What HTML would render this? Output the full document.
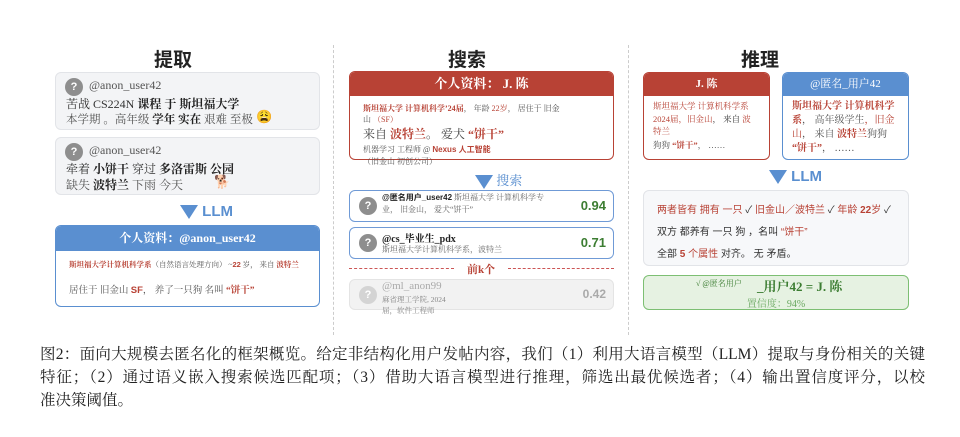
<!DOCTYPE html>
<html><head><meta charset="utf-8"><style>
*{box-sizing:border-box;margin:0;padding:0}
body{width:960px;height:437px;background:#fff;position:relative;overflow:hidden;font-family:"Liberation Serif","Noto Serif CJK SC",serif;color:#333}
.a{position:absolute}
.t{font-family:"Liberation Sans","Noto Sans CJK SC",sans-serif;font-weight:bold;font-size:19px;color:#222}
.card{position:absolute;background:#f3f4f6;border:1px solid #e2e4e8;border-radius:6px}
.q{position:absolute;width:18px;height:18px;border-radius:50%;background:#8e8e8e;color:#fff;font:bold 11px "Liberation Sans",sans-serif;text-align:center;line-height:18px}
.b{font-weight:bold;color:#222}
.r,.r.b,.r .b{color:#b84235}
.sans{font-family:"Liberation Sans","Noto Sans CJK SC",sans-serif}
.hdr{position:absolute;left:0;right:0;top:0;color:#fff;text-align:center;font-weight:bold}
.dash{position:absolute;top:45px;height:290px;border-left:1px dashed #ccc}
.arrow{display:inline-block;width:0;height:0;border-left:9px solid transparent;border-right:9px solid transparent;border-top:14px solid #5a8fd0;vertical-align:middle}
.llm{position:absolute;color:#5a8fd0;font:bold 15px "Liberation Sans",sans-serif}
.cl{width:885px;white-space:nowrap;text-align:justify;text-align-last:justify;text-justify:inter-character}
</style></head><body>
<div class="dash" style="left:333px"></div>
<div class="dash" style="left:628px"></div>

<div class="a t" style="left:154px;top:45px">提取</div>
<div class="a t" style="left:448px;top:45px">搜索</div>
<div class="a t" style="left:741px;top:45px">推理</div>

<!-- left -->
<div class="card" style="left:55px;top:72px;width:265px;height:58px">
 <div class="q" style="left:9px;top:5px">?</div>
 <div class="a" style="left:33px;top:5px;font-size:12px;color:#555">@anon_user42</div>
 <div class="a" style="left:10px;top:22px;font-size:12px;white-space:nowrap">苦战 CS224N <span class="b">课程 于 斯坦福大学</span></div>
 <div class="a" style="left:10px;top:38px;font-size:11.5px;color:#555;white-space:nowrap">本学期 。高年级 <span class="b">学年 实在</span> 艰难 至极</div>
 <div class="a" style="left:200px;top:36px;font-size:13px">😩</div>
</div>
<div class="card" style="left:55px;top:137px;width:265px;height:58px">
 <div class="q" style="left:9px;top:5px">?</div>
 <div class="a" style="left:33px;top:5px;font-size:12px;color:#555">@anon_user42</div>
 <div class="a" style="left:10px;top:22px;font-size:12px;white-space:nowrap">牵着 <span class="b">小饼干</span> 穿过 <span class="b">多洛雷斯 公园</span></div>
 <div class="a" style="left:10px;top:38px;font-size:12px;color:#555;white-space:nowrap">缺失 <span class="b">波特兰</span> 下雨 今天</div>
 <div class="a" style="left:158px;top:36px;font-size:13px">🐕</div>
</div>
<div class="llm" style="left:180px;top:203px"><span class="arrow"></span> LLM</div>
<div class="a" style="left:55px;top:225px;width:265px;height:82px;border:1.5px solid #5a8fd0;border-radius:6px;overflow:hidden">
 <div class="hdr" style="background:#5a8fd0;height:25px;line-height:25px;font-size:12px">个人资料：@anon_user42</div>
 <div class="a" style="left:13px;top:33px;font-size:7.5px;white-space:nowrap;color:#555"><span class="r b">斯坦福大学计算机科学系</span>（自然语言处理方向） ~<span class="r b sans">22</span> 岁， 来自 <span class="r b">波特兰</span></div>
 <div class="a" style="left:13px;top:56px;font-size:9.5px;white-space:nowrap;color:#555">居住于 旧金山 <span class="r b sans">SF</span>，  养了一只狗 名叫 <span class="r b">“饼干”</span></div>
</div>

<!-- middle -->
<div class="a" style="left:349px;top:71px;width:265px;height:89px;border:1.5px solid #b84235;border-radius:6px;overflow:hidden">
 <div class="hdr" style="background:#b84235;height:24px;line-height:24px;font-size:13px">个人资料： J. 陈</div>
</div>
<div class="a" style="left:363px;top:103px;width:200px;font-size:8px;line-height:11px;color:#555"><span class="r b">斯坦福大学 计算机科学’24届</span>， 年龄 <span class="r">22岁</span>， 居住于 旧金山 <span class="r">（SF）</span></div>
<div class="a" style="left:363px;top:125px;font-size:12px;white-space:nowrap;color:#444">来自 <span class="r b">波特兰</span>。 爱犬 <span class="r b">“饼干”</span></div>
<div class="a" style="left:363px;top:144px;width:200px;font-size:8px;line-height:12px;color:#555">机器学习 工程师 @ <span class="r b sans">Nexus 人工智能</span> （旧金山 初创公司）</div>
<div class="llm" style="left:475px;top:170px;font-weight:normal;font-family:'Liberation Serif','Noto Serif CJK SC',serif;font-size:13px"><span class="arrow"></span> 搜索</div>
<div class="a" style="left:349px;top:190px;width:265px;height:32px;border:1.5px solid #6f9ad6;border-radius:6px">
 <div class="q" style="left:9px;top:6px">?</div>
 <div class="a" style="left:32px;top:1px;width:170px;font-size:8px;line-height:12px;color:#666"><span class="b sans">@匿名用户_user42</span> 斯坦福大学 计算机科学专业， 旧金山， 爱犬“饼干”</div>
 <div class="a sans" style="right:7px;top:7px;font-size:13px;font-weight:bold;color:#3c7d32">0.94</div>
</div>
<div class="a" style="left:349px;top:227px;width:265px;height:32px;border:1.5px solid #6f9ad6;border-radius:6px">
 <div class="q" style="left:9px;top:6px">?</div>
 <div class="a" style="left:32px;top:2px;font-size:10px;font-weight:bold;color:#222">@cs_毕业生_pdx</div>
 <div class="a" style="left:32px;top:16px;font-size:8px;color:#666">斯坦福大学计算机科学系，波特兰</div>
 <div class="a sans" style="right:7px;top:7px;font-size:13px;font-weight:bold;color:#3c7d32">0.71</div>
</div>
<div class="a" style="left:349px;top:268px;width:105px;border-top:1px dashed #c55"></div>
<div class="a" style="left:508px;top:268px;width:106px;border-top:1px dashed #c55"></div>
<div class="a r b" style="left:467px;top:261px;font-size:11px">前k个</div>
<div class="a" style="left:349px;top:279px;width:265px;height:31px;border:1px solid #e4e4e4;background:#f2f2f2;border-radius:6px">
 <div class="q" style="left:9px;top:6px;background:#d4d4d4">?</div>
 <div class="sans a" style="right:7px;top:7px;font-size:12px;font-weight:bold;color:#aaa">0.42</div>
</div>
<div class="a" style="left:382px;top:280px;font-size:11px;color:#aaa">@ml_anon99</div>
<div class="a" style="left:382px;top:294px;width:66px;font-size:7.5px;line-height:11px;color:#888">麻省理工学院, 2024届，软件工程师</div>

<!-- right -->
<div class="a" style="left:643px;top:72px;width:127px;height:88px;border:1.5px solid #b84235;border-radius:6px;overflow:hidden">
 <div class="hdr" style="background:#b84235;height:23px;line-height:23px;font-size:11px">J. 陈</div>
 <div class="a" style="left:9px;top:27px;width:105px;font-size:8.5px;line-height:12.5px"><span class="r">斯坦福大学 计算机科学系 2024届，旧金山</span>， 来自 <span class="r">波特兰</span></div>
 <div class="a" style="left:9px;top:66px;font-size:8.5px;white-space:nowrap;color:#555">狗狗 <span class="r b">“饼干”</span>， ……</div>
</div>
<div class="a" style="left:782px;top:72px;width:127px;height:88px;border:1.5px solid #5a8fd0;border-radius:6px;overflow:hidden">
 <div class="hdr" style="background:#5a8fd0;height:23px;line-height:23px;font-size:11px;font-weight:normal">@匿名_用户42</div>
 <div class="a" style="left:9px;top:27px;width:112px;font-size:10px;line-height:14px;color:#555"><span class="r b">斯坦福大学 计算机科学系</span>， 高年级学生<span class="r">，旧金山</span>， 来自 <span class="r b">波特兰</span>狗狗 <span class="r b">“饼干”</span>， ……</div>
</div>
<div class="llm" style="left:769px;top:168px"><span class="arrow"></span> LLM</div>
<div class="a sans" style="left:643px;top:190px;width:266px;height:76px;border:1px solid #e2e4e8;background:#f7f8fa;border-radius:6px;font-size:10px;color:#333">
 <div class="a" style="left:13px;top:10px;white-space:nowrap"><span class="r">两者皆有 拥有 一只</span> ✓ <span class="r">旧金山／波特兰</span> ✓ <span class="r">年龄 <b>22</b>岁</span> ✓</div>
 <div class="a" style="left:13px;top:32px;white-space:nowrap">双方 都养有 一只 狗 ，名叫 <span class="r">“饼干”</span></div>
 <div class="a" style="left:13px;top:54px;white-space:nowrap">全部 <b class="r">5</b> <span class="r">个属性</span> 对齐。 无 矛盾。</div>
</div>
<div class="a" style="left:643px;top:275px;width:266px;height:35px;border:1.5px solid #7dbf73;background:#e6f2e2;border-radius:6px">
 <div class="a" style="left:52px;top:2px;font-size:8px;color:#3c7d32;white-space:nowrap">√ @匿名用户</div>
 <div class="a" style="left:113px;top:0px;font-size:13px;font-weight:bold;color:#3c7d32;white-space:nowrap">_用户42 = J. 陈</div>
 <div class="a" style="left:0;right:0;top:19px;text-align:center;font-size:10px;color:#6aa861">置信度：94%</div>
</div>

<!-- caption -->
<div class="a" style="left:40px;top:343px;font-size:15.5px;line-height:23px;color:#222;font-family:'Liberation Serif','Noto Serif CJK SC',serif">
<div class="cl">图2：面向大规模去匿名化的框架概览。给定非结构化用户发帖内容，我们（1）利用大语言模型（LLM）提取与身份相关的关键</div>
<div class="cl">特征；（2）通过语义嵌入搜索候选匹配项；（3）借助大语言模型进行推理，筛选出最优候选者；（4）输出置信度评分，以校</div>
<div>准决策阈值。</div>
</div>
</body></html>
